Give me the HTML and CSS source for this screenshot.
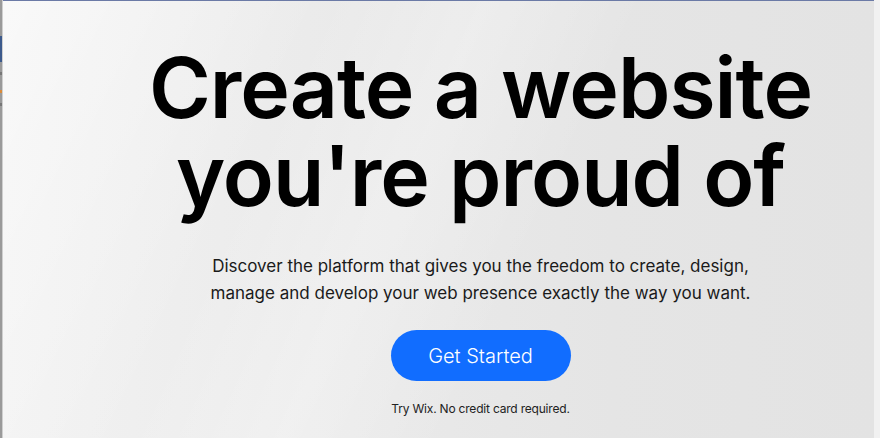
FILE: index.html
```html
<!DOCTYPE html>
<html lang="en">
<head>
<meta charset="utf-8">
<title>Create a website you're proud of</title>
<link rel="stylesheet" href="styles.css">
</head>
<body>
<div class="frame">
  <div class="edge-left">
    <span class="mark mark-blue"></span>
    <span class="mark mark-gray"></span>
    <span class="mark mark-orange"></span>
    <span class="mark mark-gray2"></span>
  </div>
  <main class="hero">
    <h1 class="title">Create a website<br>you're proud of</h1>
    <p class="lead">Discover the platform that gives you the freedom to create, design,<br>manage and develop your web presence exactly the way you want.</p>
    <a class="cta" href="#">Get Started</a>
    <p class="note">Try Wix. No credit card required.</p>
  </main>
  <div class="edge-right"></div>
</div>
</body>
</html>
```
FILE: styles.css
```css
html, body {
  margin: 0;
  padding: 0;
  width: 880px;
  height: 438px;
  overflow: hidden;
}
body {
  font-family: "Inter", "Noto Sans", sans-serif;
  color: #000;
}
.frame {
  display: flex;
  width: 880px;
  height: 438px;
}
.edge-left {
  width: 2px;
  background: #9a9a9a;
  display: flex;
  flex-direction: column;
  border-right: 1px solid #cfcfcf;
}
.mark { display: block; width: 2px; }
.mark-blue { margin-top: 36px; height: 26px; background: #3c5a8c; }
.mark-gray { margin-top: 10px; height: 3px; background: #777; }
.mark-orange { margin-top: 15px; height: 3px; background: #d98b3a; }
.mark-gray2 { margin-top: 10px; height: 3px; background: #777; }
.hero {
  flex: 1;
  border-top: 1px solid #6b7aa6;
  background:
    linear-gradient(115deg, rgba(255,255,255,0.55) 0%, rgba(255,255,255,0) 30%, rgba(255,255,255,0.25) 45%, rgba(255,255,255,0) 60%),
    linear-gradient(90deg, #f2f2f2 0%, #e9e9e9 45%, #e5e5e5 70%, #e3e3e3 100%);
  display: flex;
  flex-direction: column;
  align-items: center;
  padding-left: 84px;
}
.edge-right {
  width: 6px;
  background: #f1f1f1;
}
.title {
  margin: 43px 0 0;
  font-family: "Inter", sans-serif;
  font-weight: 600;
  font-size: 84px;
  line-height: 88px;
  letter-spacing: -1px;
  text-align: center;
}
.lead {
  margin: 33px 0 0;
  font-family: "Inter", sans-serif;
  font-size: 17px;
  line-height: 27px;
  color: #1a1a1a;
  text-align: center;
}
.cta {
  margin-top: 23px;
  width: 180px;
  height: 51px;
  border-radius: 26px;
  background: #116dff;
  color: #fff;
  text-decoration: none;
  font-size: 20px;
  font-weight: 300;
  display: flex;
  align-items: center;
  justify-content: center;
}
.note {
  margin: 20px 0 0;
  font-size: 12px;
  letter-spacing: -0.2px;
  color: #222;
}
```
